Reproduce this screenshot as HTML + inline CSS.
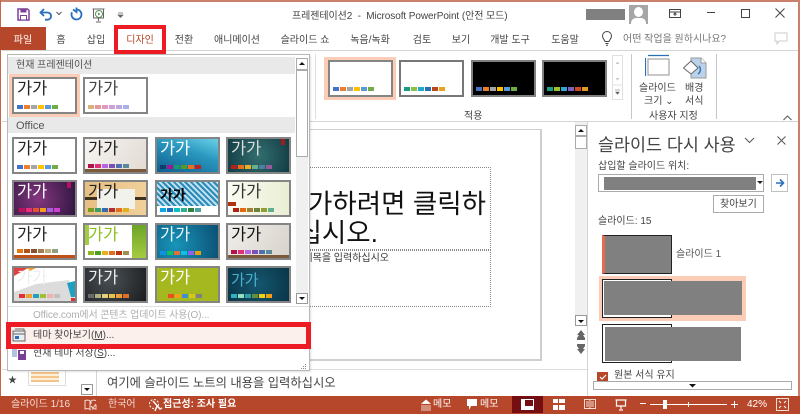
<!DOCTYPE html>
<html lang="ko"><head><meta charset="utf-8"><title>PowerPoint</title>
<style>
html,body{margin:0;padding:0;background:#fff}
#r{position:relative;width:800px;height:414px;overflow:hidden;background:#fff;font:10px/14px "Liberation Sans","Noto Sans CJK KR",sans-serif;color:#444}
#r div,#r span.a,#r svg{position:absolute}
.x{white-space:nowrap}
.tab{top:33px;white-space:nowrap;transform:translateX(-50%);color:#444;font-size:10px;line-height:16px}
.t{width:61px;height:33px;border:2px solid #858585;overflow:hidden;background:#fff;color:#222}
.t>p{margin:0;position:absolute;left:3px;top:-2px;font-size:16.500px;line-height:24px;white-space:nowrap}
.t>b{position:absolute;left:3px;bottom:3px;height:4px;display:flex;font-size:0}
.t>b>u{display:block;width:6px;height:4px;margin-right:1px}
.t>div{position:absolute}
.btn{background:#fff;border:1px solid #ababab;box-sizing:border-box}
</style></head><body>
<div id="r">
<!-- window frame -->
<div style="left:0;top:0;width:800px;height:2px;background:#c9806d"></div>
<div style="left:0;top:0;width:1px;height:396px;background:#c9654c"></div>
<div style="left:798px;top:0;width:2px;height:396px;background:#c9806d"></div>

<!-- quick access -->
<svg style="left:17px;top:8px" width="13" height="13" viewBox="0 0 13 13"><path d="M1 1h9.500L12 2.500V12H1z" fill="#fff" stroke="#7b3f98" stroke-width="1.500"/><rect x="3.500" y="1" width="6" height="3.500" fill="#7b3f98"/><rect x="3.500" y="7.500" width="6" height="4.500" fill="#fff" stroke="#7b3f98"/></svg>
<svg style="left:39px;top:8px" width="14" height="13" viewBox="0 0 14 13"><path d="M5 1L1.500 4.500 5 8M2 4.500h6.500a3.600 3.600 0 0 1 0 7.200H6" fill="none" stroke="#2a6fc0" stroke-width="1.800"/></svg>
<svg style="left:56px;top:11px" width="6" height="5" viewBox="0 0 6 5"><path d="M.5 1L3 3.500 5.500 1" fill="none" stroke="#555"/></svg>
<svg style="left:69px;top:7px" width="14" height="14" viewBox="0 0 14 14"><path d="M7.500 2.500a5 5 0 1 1-4.500 2.800M7.500 .5v4.500L4 2.500" fill="none" stroke="#2a6fc0" stroke-width="1.800"/></svg>
<svg style="left:91px;top:8px" width="15" height="15" viewBox="0 0 15 15"><path d="M1.500 1h12M2.500 1v9h10V1M7.500 10v3M5 14h5" fill="none" stroke="#666"/><circle cx="8" cy="6" r="3.500" fill="#fff" stroke="#5a9060"/><path d="M7 4.500l2.500 1.500L7 7.500z" fill="#5a9060"/></svg>
<svg style="left:117px;top:12px" width="7" height="6" viewBox="0 0 7 6"><path d="M1 1h5M1 3h5l-2.500 2.500z" fill="#666" stroke="#666" stroke-width=".7"/></svg>
<div class="x" style="left:292px;top:10px;color:#444;letter-spacing:-.08px">프레젠테이션2&nbsp; - &nbsp;Microsoft PowerPoint (안전 모드)</div>
<div style="left:586px;top:9px;width:39px;height:11px;background:#808080"></div>
<div style="left:629px;top:5px;width:19px;height:19px;background:#a6a6a6;overflow:hidden"><div style="left:5px;top:2px;width:9px;height:10px;border-radius:50%;background:#fff"></div><div style="left:2px;top:13px;width:15px;height:9px;border-radius:5px 5px 0 0;background:#fff"></div></div>
<svg style="left:668px;top:8px" width="14" height="11" viewBox="0 0 14 11"><path d="M1.500 1.500h11v8h-11zM1.500 4h11M7 5v3M5.500 6.500L7 5l1.500 1.500" fill="none" stroke="#444"/></svg>
<div style="left:707px;top:12px;width:8px;height:1px;background:#444"></div>
<div style="left:741px;top:9px;width:7px;height:7px;border:1px solid #444"></div>
<svg style="left:775px;top:8px" width="10" height="10" viewBox="0 0 10 10"><path d="M.5 .5l9 9M9.500 .5l-9 9" stroke="#444" fill="none"/></svg>

<!-- tabs -->
<div style="left:0;top:27px;width:46px;height:23px;background:#b7472a"></div>
<div class="tab" style="left:23px;color:#fff">파일</div>
<div class="tab" style="left:61px">홈</div>
<div class="tab" style="left:96px">삽입</div>
<div class="tab" style="left:140px;color:#b7472a">디자인</div>
<div class="tab" style="left:184px">전환</div>
<div class="tab" style="left:237px">애니메이션</div>
<div class="tab" style="left:305px">슬라이드 쇼</div>
<div class="tab" style="left:370px">녹음/녹화</div>
<div class="tab" style="left:422px">검토</div>
<div class="tab" style="left:461px">보기</div>
<div class="tab" style="left:510px">개발 도구</div>
<div class="tab" style="left:565px">도움말</div>
<svg style="left:601px;top:31px" width="12" height="15" viewBox="0 0 12 15"><path d="M4 10.500C3.500 8.500 1.500 7.800 1.500 5a4.500 4.500 0 0 1 9 0c0 2.800-2 3.500-2.500 5.500zM4.500 12.500h3M5 14.300h2" fill="none" stroke="#444"/></svg>
<div class="x" style="left:623px;top:32px;line-height:16px;color:#777">어떤 작업을 원하시나요?</div>
<svg style="left:774px;top:32px" width="14" height="13" viewBox="0 0 14 13"><path d="M1 1h12v8H5l-2 3V9H1z" fill="none" stroke="#ccc"/></svg>

<!-- ribbon -->
<div style="left:2px;top:50px;width:796px;height:1px;background:#d4d4d4"></div>
<div style="left:2px;top:121px;width:796px;height:1px;background:#d4d4d4"></div>
<div style="left:631px;top:54px;width:1px;height:65px;background:#c6c6c6"></div>
<div style="left:716px;top:54px;width:1px;height:65px;background:#c6c6c6"></div>
<div style="left:315px;top:54px;width:1px;height:65px;background:#e0e0e0"></div>
<div style="left:324px;top:57px;width:72px;height:43px;background:#fbcdb6"></div>
<div class="t" style="left:328px;top:60px"><b style="bottom:4px"><u style="background:#4472c4"></u><u style="background:#ed7d31"></u><u style="background:#a5a5a5"></u><u style="background:#ffc000"></u><u style="background:#5b9bd5"></u><u style="background:#70ad47"></u></b></div>
<div class="t" style="left:399px;top:60px;border-color:#777"><b style="bottom:4px"><u style="background:#1a9a80"></u><u style="background:#8cc040"></u><u style="background:#20a8d0"></u><u style="background:#2a70b0"></u><u style="background:#b84a1a"></u><u style="background:#f0a020"></u></b></div>
<div class="t" style="left:471px;top:60px;background:#000;border-color:#808080"><b style="bottom:4px"><u style="background:#4472c4"></u><u style="background:#ed7d31"></u><u style="background:#a5a5a5"></u><u style="background:#ffc000"></u><u style="background:#5b9bd5"></u><u style="background:#70ad47"></u></b></div>
<div class="t" style="left:542px;top:60px;background:#000;border-color:#808080"><b style="bottom:4px"><u style="background:#1aa080"></u><u style="background:#a0c030"></u><u style="background:#30a8d0"></u><u style="background:#8060c0"></u><u style="background:#d04a20"></u><u style="background:#e09a20"></u></b></div>
<div style="left:612px;top:55px;width:11px;height:45px;border:1px solid #e0e0e0;box-sizing:border-box"></div>
<svg style="left:612px;top:55px" width="11" height="46" viewBox="0 0 11 46"><path d="M3.500 9L5.500 6.500 7.500 9z" fill="#c8c8c8"/><path d="M3.500 23L5.500 25.500 7.500 23z" fill="#c8c8c8"/><path d="M.5 30h10" stroke="#e0e0e0"/><path d="M3 35h5M3.500 37h4l-2 2.500z" fill="#666" stroke="#666" stroke-width=".5"/></svg>
<div class="x" style="left:464px;top:110px;font-size:10px">적용</div>
<svg style="left:645px;top:54px" width="26" height="24" viewBox="0 0 26 24"><rect x="3" y="5" width="21" height="16" fill="#fff" stroke="#909090"/><path d="M.5 4v18M3 1.500h21" fill="none" stroke="#2a70b8" stroke-width="1.200"/></svg>
<svg style="left:682px;top:56px" width="26" height="24" viewBox="0 0 26 24"><path d="M9 2h10l5 5v15H9z" fill="#bcd2ea" stroke="#999"/><path d="M19 2v5h5" fill="#fff" stroke="#999"/><path d="M1.500 12L9 5l7 7-7 6z" fill="#fff" stroke="#666"/><path d="M17 10c2 2 2 6-1 8" fill="none" stroke="#2a70b8" stroke-width="1.400"/></svg>
<div class="x" style="left:639px;top:82px;font-size:10px">슬라이드</div>
<div class="x" style="left:644px;top:95px;font-size:10px">크기 ⌄</div>
<div class="x" style="left:685px;top:82px;font-size:10px">배경</div>
<div class="x" style="left:685px;top:95px;font-size:10px">서식</div>
<div class="x" style="left:649px;top:110px;font-size:10px">사용자 지정</div>
<svg style="left:783px;top:115px" width="9" height="6" viewBox="0 0 9 6"><path d="M.5 5L4.500 1 8.500 5" fill="none" stroke="#555"/></svg>

<!-- canvas -->
<div style="left:310px;top:129px;width:232px;height:232px;background:#fff;border:1px solid #cfcfcf;border-width:1px 2px 2px 0;box-sizing:border-box"></div>
<div style="left:250px;top:167px;width:241px;height:83px;border:1px dotted #888;box-sizing:border-box"></div>
<div style="left:250px;top:250px;width:241px;height:57px;border:1px dotted #888;box-sizing:border-box"></div>
<div class="x" style="right:314px;top:189px;font-size:26.500px;line-height:30px;color:#111">제목을 추가하려면 클릭하</div>
<div class="x" style="right:422px;top:218px;font-size:26.500px;line-height:30px;color:#111">십시오.</div>
<div class="x" style="right:411px;top:252px;font-size:10px;color:#333">부제목을 입력하십시오</div>
<div style="left:2px;top:369px;width:585px;height:1px;background:#dcdcdc"></div>

<!-- main scroll -->
<div style="left:575px;top:122px;width:12px;height:194px;background:#f0f0f0"></div>
<div style="left:587px;top:122px;width:1px;height:274px;background:#d4d4d4"></div>
<div class="btn" style="left:575px;top:125px;width:12px;height:11px"></div>
<svg style="left:577px;top:128px" width="8" height="5"><path d="M1 4h6L4 1z" fill="#111"/></svg>
<div class="btn" style="left:575px;top:136px;width:12px;height:13px"></div>
<div class="btn" style="left:575px;top:315px;width:12px;height:11px;border-color:#999"></div>
<svg style="left:577px;top:319px" width="8" height="5"><path d="M1 1h6L4 4z" fill="#111"/></svg>
<svg style="left:576px;top:329px" width="10" height="13"><path d="M5 1L9 6H7l2 3v2H1V9l2-3H1z" fill="#666"/></svg>
<svg style="left:576px;top:342px" width="10" height="13"><path d="M5 12L9 7H7l2-3V2H1v2l2 3H1z" fill="#666"/></svg>

<!-- notes + slides bottom -->
<div class="x" style="left:8px;top:373px;font-size:9px;color:#444">★</div>
<div style="left:28px;top:365px;width:38px;height:21px;background:#fff;border:1px solid #ddd;box-sizing:border-box"></div>
<div style="left:31px;top:372px;width:28px;height:10px;background:repeating-linear-gradient(0deg,#f4c488 0 2px,#fbeedc 2px 4px)"></div>
<div style="left:96px;top:370px;width:1px;height:26px;background:#d4d4d4"></div>
<div class="btn" style="left:81px;top:384px;width:12px;height:11px;border-color:#999"></div>
<svg style="left:83px;top:387px" width="8" height="5"><path d="M1 1h6L4 4z" fill="#111"/></svg>
<div class="x" style="left:107px;top:374px;font-size:12.300px;line-height:18px;color:#444">여기에 슬라이드 노트의 내용을 입력하십시오</div>

<!-- dropdown -->
<div style="left:7px;top:54px;width:303px;height:317px;background:#fff;border:1px solid #b8b8b8;box-sizing:border-box;box-shadow:1px 1px 2px rgba(0,0,0,.12)"></div>
<div style="left:8px;top:57px;width:287px;height:17px;background:#e9e9e9"></div>
<div class="x" style="left:16px;top:59px;color:#555;font-size:10px">현재 프레젠테이션</div>
<div style="left:9px;top:74px;width:71px;height:43px;background:#fbcdb6"></div>
<div class="t" style="left:12px;top:77px"><p>가가</p><b><u style="background:#4472c4"></u><u style="background:#ed7d31"></u><u style="background:#a5a5a5"></u><u style="background:#ffc000"></u><u style="background:#5b9bd5"></u><u style="background:#70ad47"></u></b></div>
<div class="t" style="left:83px;top:77px"><p style="color:#444">가가</p><b><u style="background:#deb080"></u><u style="background:#e59a9a"></u><u style="background:#e09ac0"></u><u style="background:#cf9fd8"></u><u style="background:#bca8e0"></u><u style="background:#a8b0e8"></u></b></div>
<div style="left:8px;top:117px;width:287px;height:16px;background:#e9e9e9"></div>
<div class="x" style="left:16px;top:119px;color:#555;font-size:11px">Office</div>

<!-- gallery row 1 -->
<div class="t" style="left:12px;top:137px"><p>가가</p><b><u style="background:#4472c4"></u><u style="background:#ed7d31"></u><u style="background:#a5a5a5"></u><u style="background:#ffc000"></u><u style="background:#5b9bd5"></u><u style="background:#70ad47"></u></b></div>
<div class="t" style="left:83px;top:137px;background:linear-gradient(120deg,#f7f4f2,#e2dbd4)"><div style="left:0;bottom:0;width:61px;height:3px;background:#7a5a3a"></div><p>가가</p><b style="bottom:4px"><u style="background:#b0124a"></u><u style="background:#e0307a"></u><u style="background:#b565e0"></u><u style="background:#7d4fb5"></u><u style="background:#4f6fb0"></u><u style="background:#5a8a9a"></u></b></div>
<div class="t" style="left:155px;top:137px;background:linear-gradient(20deg,#0d5f8e,#2a98bf 60%,#6ad0e8);color:#fff"><p>가가</p><b><u style="background:#0f3d6e"></u><u style="background:#a01890"></u><u style="background:#1a9a70"></u><u style="background:#5a9a20"></u><u style="background:#e87020"></u><u style="background:#c02020"></u></b></div>
<div class="t" style="left:226px;top:137px;background:radial-gradient(circle,#336f70,#123c44);color:#ddd"><div style="left:53px;top:0;width:4px;height:6px;background:#a01a20"></div><p>가가</p><b><u style="background:#b71e1e"></u><u style="background:#e8701c"></u><u style="background:#e8b020"></u><u style="background:#6ab090"></u><u style="background:#4a80a0"></u><u style="background:#9a5a9a"></u></b></div>
<!-- row 2 -->
<div class="t" style="left:12px;top:180px;background:radial-gradient(circle at 40% 50%,#84367f,#2f1640);color:#fff"><div style="left:53px;top:0;width:4px;height:6px;background:#b01060"></div><p>가가</p><b style="left:5px"><u style="background:#c0105a"></u><u style="background:#e8307a"></u><u style="background:#e85030"></u><u style="background:#f0a020"></u><u style="background:#a060e0"></u><u style="background:#d040d0"></u></b></div>
<div class="t" style="left:83px;top:180px;background:linear-gradient(90deg,#e7bf82,#f0d09a)"><div style="left:0;top:15px;width:61px;height:3px;background:#403020"></div><div style="left:12px;top:7px;width:38px;height:20px;background:#f2f2ec"></div><p style="color:#222">가가</p><b><u style="background:#7a9a20"></u><u style="background:#3a9a70"></u><u style="background:#3a6ab0"></u><u style="background:#b03030"></u><u style="background:#e07020"></u><u style="background:#e0b020"></u></b></div>
<div class="t" style="left:155px;top:180px;background:#fff"><div style="left:0;top:0;width:61px;height:24px;background:repeating-linear-gradient(45deg,#2a8ab8 0 2px,#bfe0ee 2px 4px)"></div><p style="color:#000;font-size:14px;top:1px;font-weight:700">가가</p><b><u style="background:#10a8e0"></u><u style="background:#1a70c0"></u><u style="background:#10c0c0"></u><u style="background:#30b090"></u><u style="background:#308040"></u><u style="background:#50a0a0"></u></b></div>
<div class="t" style="left:226px;top:180px;background:linear-gradient(90deg,#fbfbf2,#eaeed4)"><div style="left:0;top:20px;width:8px;height:4px;background:#b03010"></div><p style="color:#333">가가</p><b style="left:5px"><u style="background:#b02010"></u><u style="background:#e06a10"></u><u style="background:#a08030"></u><u style="background:#708040"></u><u style="background:#90a030"></u><u style="background:#60b090"></u></b></div>
<!-- row 3 -->
<div class="t" style="left:12px;top:223px"><div style="left:0;bottom:0;width:61px;height:3px;background:#c0501a"></div><p>가가</p><b style="bottom:5px"><u style="background:#e07a10"></u><u style="background:#b0501a"></u><u style="background:#8a5030"></u><u style="background:#a08050"></u><u style="background:#c0b080"></u><u style="background:#90a080"></u></b></div>
<div class="t" style="left:83px;top:223px;color:#8cc020"><div style="left:47px;top:0;width:14px;height:33px;background:linear-gradient(#6ea428,#a4cc40)"></div><div style="left:0;top:0;width:4px;height:20px;background:#a4cc40"></div><p style="color:#8cc020">가가</p><b><u style="background:#90b820"></u><u style="background:#50a020"></u><u style="background:#e8b020"></u><u style="background:#e07020"></u><u style="background:#c03010"></u><u style="background:#a09050"></u></b></div>
<div class="t" style="left:155px;top:223px;background:radial-gradient(circle at 30% 60%,#1894ba,#0b4f72);color:#e8f6fa"><p>가가</p><b><u style="background:#1090e0"></u><u style="background:#10c060"></u><u style="background:#e07040"></u><u style="background:#10c0e0"></u><u style="background:#9060f0"></u><u style="background:#e0a010"></u></b></div>
<div class="t" style="left:226px;top:223px;background:linear-gradient(120deg,#f0eeea,#d8d2cb)"><div style="left:0;bottom:0;width:61px;height:3px;background:#7a5a3a"></div><p style="color:#111">가가</p><b style="bottom:4px"><u style="background:#b0124a"></u><u style="background:#e0307a"></u><u style="background:#b565e0"></u><u style="background:#7d4fb5"></u><u style="background:#4f6fb0"></u><u style="background:#5a8a9a"></u></b></div>
<!-- row 4 -->
<div class="t" style="left:12px;top:266px;color:#eee"><svg style="left:0;top:0" width="61" height="33" viewBox="0 0 61 33"><path d="M0 33V24L22 16 55 12 61 33z" fill="#dcdcdc"/><path d="M0 0h14L0 8z" fill="#e04040"/><path d="M12 0h10l-6 3z" fill="#f0a030"/><path d="M53 15l8-2v16h-4z" fill="#20a0c0"/><path d="M57 30h4v3h-4z" fill="#e03030"/></svg><p style="color:#eee">가가</p><b style="left:5px"><u style="background:#e03030"></u><u style="background:#f0a030"></u><u style="background:#20a0c0"></u><u style="background:#a0c030"></u><u style="background:#f0b0b0"></u><u style="background:#c0c0c0"></u></b></div>
<div class="t" style="left:83px;top:266px;background:radial-gradient(circle at 40% 30%,#4a5054,#1a1d20);color:#eee"><p>가가</p><b><u style="background:#6a6a6a"></u><u style="background:#b0b080"></u><u style="background:#e0d080"></u><u style="background:#f0c040"></u><u style="background:#f0a030"></u><u style="background:#e07020"></u></b></div>
<div class="t" style="left:155px;top:266px;background:#a6b820;color:#fff"><p>가가</p><b style="left:11px"><u style="background:#e85020"></u><u style="background:#f0a010"></u><u style="background:#4090d0"></u><u style="background:#d0c820"></u><u style="background:#808080"></u></b></div>
<div class="t" style="left:226px;top:266px;background:radial-gradient(circle at 50% 50%,#14566e,#0a3548);color:#4ab0d0"><p style="font-size:15px;top:1px">가가</p><b><u style="background:#30b0c0"></u><u style="background:#90e0c0"></u><u style="background:#30a0a0"></u><u style="background:#609040"></u><u style="background:#f0d010"></u><u style="background:#f0a010"></u></b></div>

<!-- dropdown scroll -->
<div class="btn" style="left:296px;top:58px;width:12px;height:12px"></div>
<svg style="left:298px;top:61px" width="8" height="5"><path d="M1 4h6L4 1z" fill="#111"/></svg>
<div class="btn" style="left:296px;top:70px;width:12px;height:87px"></div>
<div style="left:296px;top:157px;width:12px;height:137px;background:#f0f0f0"></div>
<div class="btn" style="left:296px;top:293px;width:12px;height:11px;border-color:#999"></div>
<svg style="left:298px;top:296px" width="8" height="5"><path d="M1 1h6L4 4z" fill="#111"/></svg>

<!-- dropdown commands -->
<div style="left:8px;top:306px;width:301px;height:1px;background:#e0e0e0"></div>
<div class="x" style="left:33px;top:309px;color:#b0b0b0;letter-spacing:-.12px">Office.com에서 콘텐츠 업데이트 사용(O)...</div>
<div style="left:11px;top:326px;width:296px;height:18px;background:#fcf0ed"></div>
<div class="x" style="left:33px;top:329px;color:#444">테마 찾아보기(<u>M</u>)...</div>
<div class="x" style="left:33px;top:347px;color:#444">현재 테마 저장(<u>S</u>)...</div>
<svg style="left:12px;top:328px" width="14" height="14" viewBox="0 0 14 14"><path d="M1 3h12v10H1z" fill="#e8eef4" stroke="#666"/><path d="M3 1h9v2M1 6h12" fill="none" stroke="#666"/><rect x="3" y="8" width="4" height="3" fill="#2a70b8"/></svg>
<svg style="left:12px;top:349px" width="14" height="11" viewBox="0 0 14 11"><rect x="0" y="0" width="5" height="8" fill="#b0c4de"/><rect x="6" y="1" width="8" height="10" fill="#7b3f98"/><rect x="8" y="2" width="4" height="3" fill="#fff"/></svg>
<svg style="left:301px;top:363px" width="6" height="6"><path d="M4 1h1v1H4zM2 3h1v1H2zM4 3h1v1H4zM0 5h1v1H0zM2 5h1v1H2zM4 5h1v1H4z" fill="#888"/></svg>

<!-- red boxes -->
<div style="left:114px;top:25px;width:52px;height:29px;border:4px solid #ed1c24;box-sizing:border-box"></div>
<div style="left:6px;top:322px;width:305px;height:27px;border:5px solid #ed1c24;box-sizing:border-box"></div>

<!-- right pane -->
<div class="x" style="left:598px;top:133px;font-size:17.400px;line-height:24px;color:#444">슬라이드 다시 사용</div>
<svg style="left:744px;top:137px" width="11" height="7" viewBox="0 0 11 7"><path d="M1 1l4.500 4.500L10 1" fill="none" stroke="#555"/></svg>
<svg style="left:777px;top:136px" width="9" height="9" viewBox="0 0 9 9"><path d="M.5 .5l8 8M8.500 .5l-8 8" stroke="#555" fill="none"/></svg>
<div class="x" style="left:598px;top:160px">삽입할 슬라이드 위치:</div>
<div style="left:598px;top:174px;width:166px;height:18px;border:1px solid #ababab;box-sizing:border-box;background:#fff"></div>
<div style="left:604px;top:177px;width:152px;height:13px;background:#808080"></div>
<svg style="left:757px;top:181px" width="6" height="4"><path d="M0 0h6L3 3z" fill="#222"/></svg>
<div style="left:771px;top:174px;width:17px;height:18px;border:1px solid #c0c0c0;box-sizing:border-box;background:#fff"></div>
<svg style="left:775px;top:178px" width="10" height="10" viewBox="0 0 10 10"><path d="M1 5h7M5 1.500L8.500 5 5 8.500" fill="none" stroke="#2a70b8" stroke-width="1.600"/></svg>
<div class="btn" style="left:713px;top:195px;width:51px;height:18px;border-color:#ababab"></div>
<div class="x" style="left:720px;top:198px">찾아보기</div>
<div class="x" style="left:598px;top:215px">슬라이드: 15</div>
<div style="left:602px;top:235px;width:70px;height:39px;border:1px solid #222;box-sizing:border-box;background:#808080;border-left:3px solid #ea6a50"></div>
<div class="x" style="left:676px;top:248px;color:#555">슬라이드 1</div>
<div style="left:599px;top:276px;width:147px;height:45px;background:#fbcdb6"></div>
<div style="left:602px;top:279px;width:70px;height:39px;border:1px solid #222;box-sizing:border-box;background:#fff"></div>
<div style="left:604px;top:281px;width:138px;height:34px;background:#808080"></div>
<div style="left:602px;top:324px;width:70px;height:39px;border:1px solid #222;box-sizing:border-box;background:#fff"></div>
<div style="left:605px;top:327px;width:136px;height:34px;background:#808080"></div>
<div style="left:597px;top:372px;width:11px;height:10px;background:#b7472a"></div>
<svg style="left:599px;top:374px" width="8" height="6"><path d="M1 3l2 2 4-4" fill="none" stroke="#fff" stroke-width="1.200"/></svg>
<div class="x" style="left:614px;top:369px;color:#444">원본 서식 유지</div>
<div style="left:593px;top:381px;width:199px;height:9px;border:1px solid #ababab;box-sizing:border-box;background:#fff"></div>
<svg style="left:689px;top:384px" width="7" height="4"><path d="M0 0h7L3.500 3.500z" fill="#111"/></svg>

<!-- status bar -->
<div style="left:0;top:396px;width:800px;height:18px;background:#b7472a"></div>
<div class="x" style="left:11px;top:398px;color:#f4dcd4">슬라이드 1/16</div>
<svg style="left:84px;top:399px" width="13" height="12" viewBox="0 0 13 12"><path d="M6 2C5 1 3 1 1 1.500V10c2-.5 4-.5 5 .5zM7 5V2c1-1 3-1 5-.5M12 6v4c-1.500-.3-3-.3-4 .2M7 7l2 2 3-4" fill="none" stroke="#f4dcd4"/></svg>
<div class="x" style="left:108px;top:398px;color:#f4dcd4">한국어</div>
<svg style="left:148px;top:398px" width="15" height="14" viewBox="0 0 15 14"><circle cx="6" cy="6" r="4.500" fill="none" stroke="#fff" stroke-dasharray="2 1.500"/><path d="M5 3l7 8 2-1M9 8l-2 5" fill="none" stroke="#fff" stroke-width="1.400"/></svg>
<div class="x" style="left:163px;top:398px;color:#fff;font-weight:700">접근성: 조사 필요</div>
<svg style="left:420px;top:399px" width="12" height="12" viewBox="0 0 12 12"><path d="M6 1L2 4.500h8zM1 7h10M1 9h10M1 11h10" fill="#fff" stroke="#fff" stroke-width=".8"/></svg>
<div class="x" style="left:433px;top:398px;color:#fff">메모</div>
<svg style="left:466px;top:398px" width="12" height="13" viewBox="0 0 12 13"><path d="M1 1h10v7H5l-2 4V8H1z" fill="#fff"/></svg>
<div class="x" style="left:480px;top:398px;color:#fff">메모</div>
<div style="left:512px;top:396px;width:31px;height:17px;background:#750e13"></div>
<svg style="left:521px;top:399px" width="13" height="11" viewBox="0 0 13 11"><path d="M0 0h13v11H0z" fill="#fff"/><path d="M4 1h8v6H4z" fill="#750e13"/></svg>
<svg style="left:553px;top:399px" width="12" height="11"><path d="M0 0h5v4H0zM6 0h6v4H6zM0 6h5v5H0zM6 6h6v5H6z" fill="#fff"/></svg>
<svg style="left:584px;top:398px" width="12" height="12" viewBox="0 0 12 12"><path d="M.5 1.500h11v9H.5zM6 1v10M2 4h3M2 6h3M2 8h3M7 4h3M7 6h3M7 8h3" fill="none" stroke="#f4dcd4"/></svg>
<svg style="left:615px;top:399px" width="12" height="12" viewBox="0 0 12 12"><path d="M.5 1h11M1.500 1v6h9V1M6 7v3M4 11h4" fill="none" stroke="#fff" stroke-width="1.200"/></svg>
<div style="left:640px;top:403px;width:6px;height:1px;background:#fff"></div>
<div style="left:650px;top:404px;width:77px;height:1px;background:#fff"></div>
<div style="left:663px;top:400px;width:4px;height:9px;background:#fff"></div>
<div style="left:688px;top:402px;width:1px;height:5px;background:#fff"></div>
<div style="left:731px;top:404px;width:7px;height:1px;background:#fff"></div>
<div style="left:734px;top:401px;width:1px;height:7px;background:#fff"></div>
<div class="x" style="left:747px;top:398px;color:#fff">42%</div>
<svg style="left:776px;top:398px" width="13" height="13" viewBox="0 0 13 13"><path d="M.5 .5h12v12H.5z" fill="none" stroke="#f4dcd4"/><path d="M3 3l2 2M10 3l-2 2M3 10l2-2M10 10l-2-2" stroke="#fff" fill="none"/></svg>
</div>
</body></html>
